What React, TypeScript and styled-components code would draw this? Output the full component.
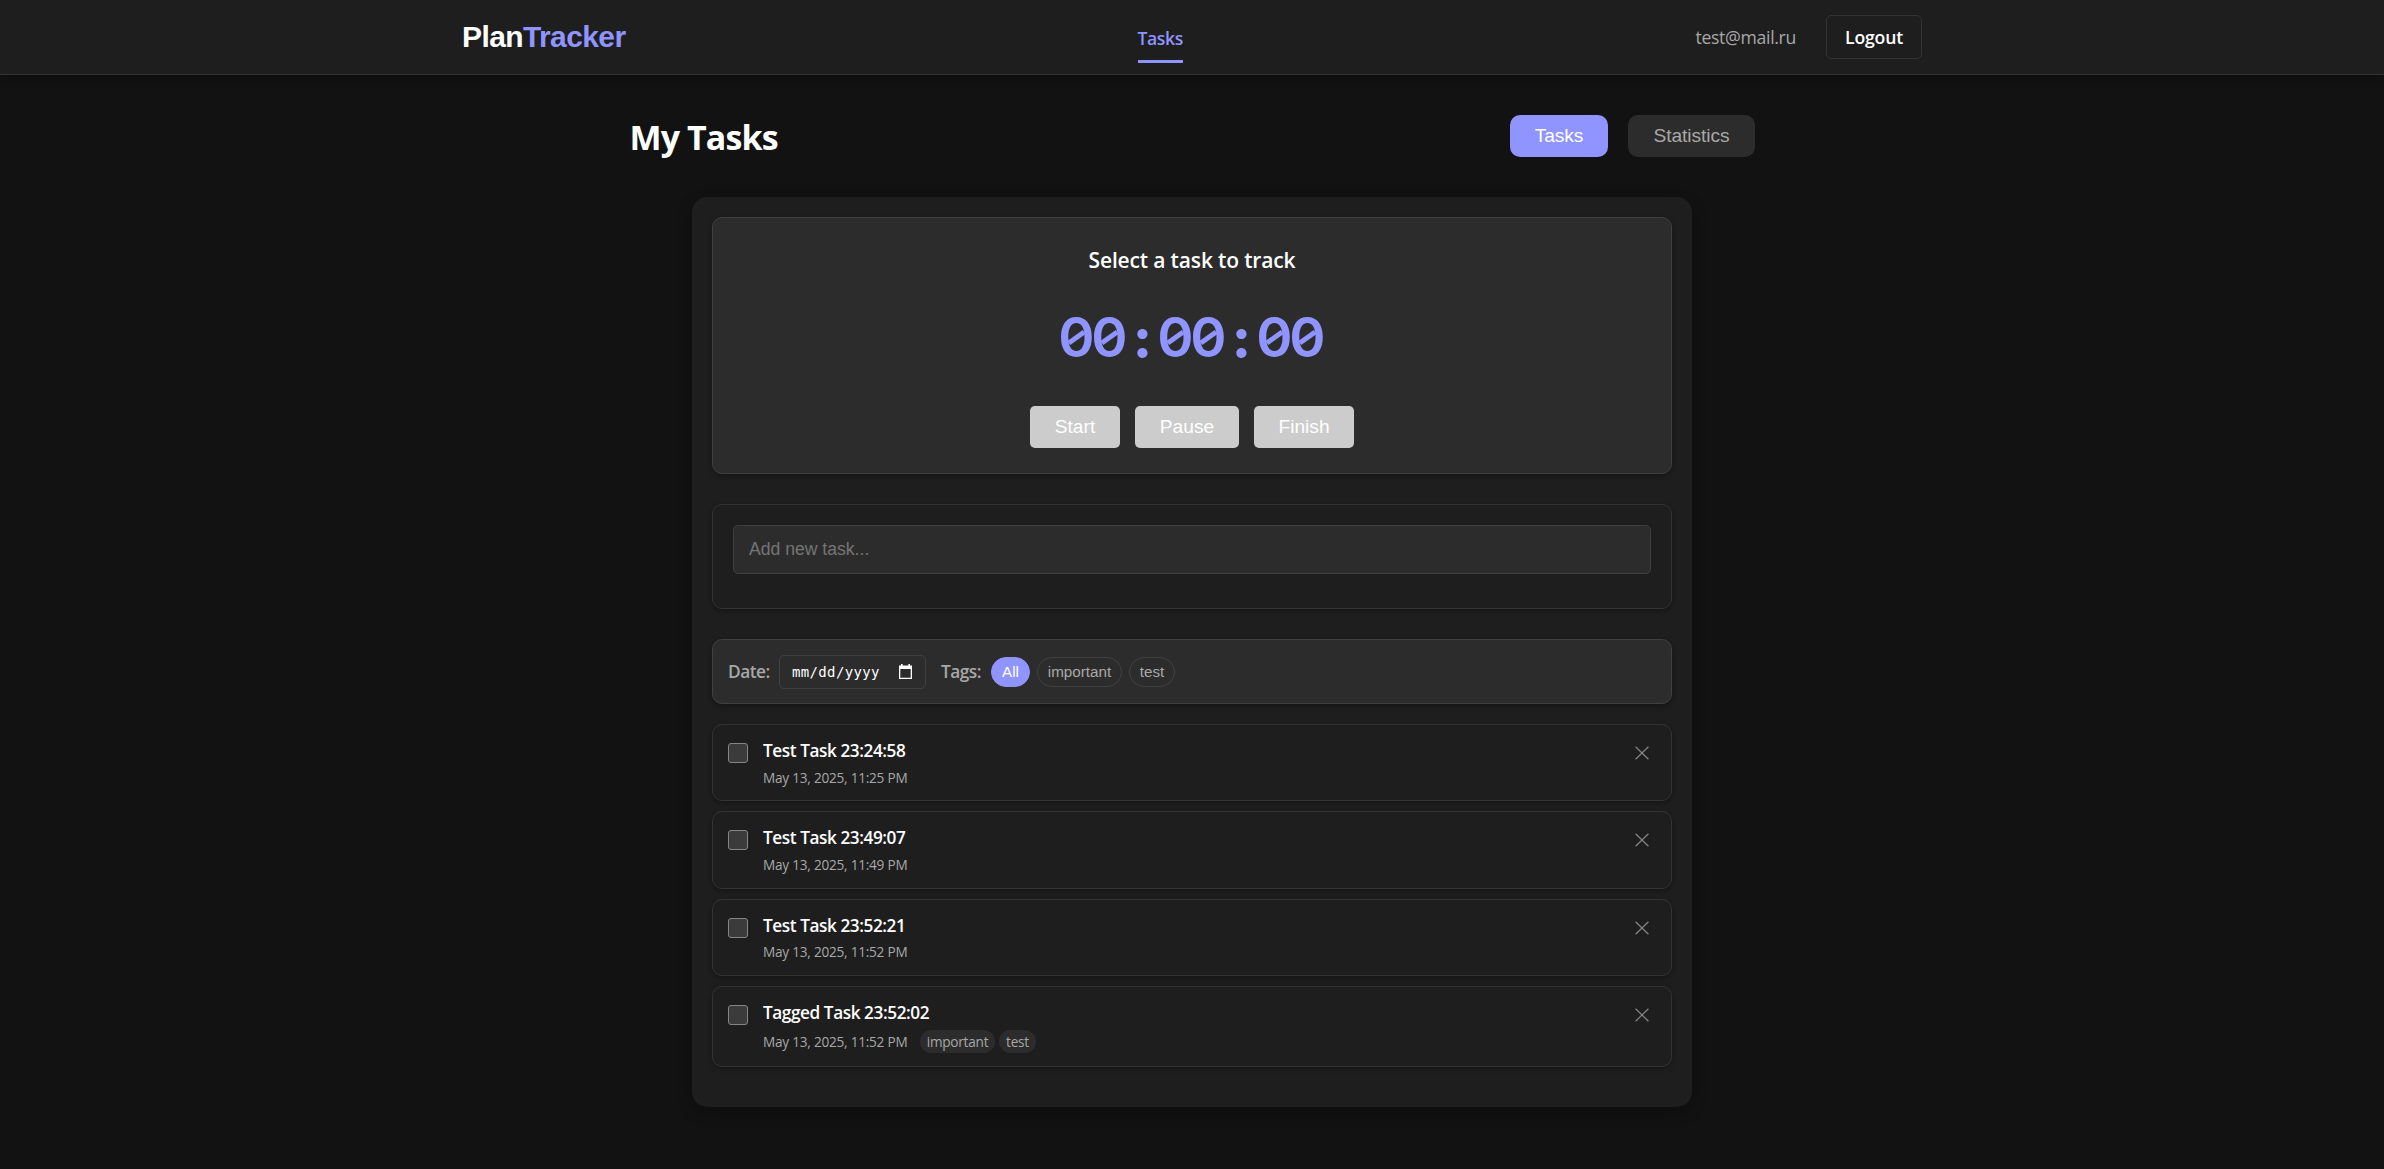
import React from "react";
import styled, { createGlobalStyle } from "styled-components";

const UI = `"Open Sans", "Noto Sans", sans-serif`;
const ARIAL = `"Liberation Sans", Arial, sans-serif`;

const Global = createGlobalStyle`
  *, *::before, *::after { box-sizing: border-box; }
  body { margin: 0; background: #121212; color: #fff; font-family: ${UI}; font-size: 17px; }
  h1, h2, h3, p, ul { margin: 0; padding: 0; font: inherit; }
  button, input { margin: 0; }
`;

const Page = styled.div`
  min-height: 1169px;
  background: #121212;
`;

const Header = styled.header`
  height: 75px;
  background: #1e1e1e;
  border-bottom: 1px solid #333;
  box-shadow: 0 2px 8px rgba(0, 0, 0, 0.3);
`;

const HeaderInner = styled.div`
  width: 1460px;
  height: 74px;
  margin: 0 auto;
  display: grid;
  grid-template-columns: 1fr auto 1fr;
  align-items: center;
`;

const Logo = styled.div`
  font: 700 30px/36px ${ARIAL};
  letter-spacing: -0.6px;
  span { color: #8f94fe; }
`;

const NavLink = styled.a`
  align-self: start;
  margin: 22px 64px 0 0;
  width: 45px;
  height: 41px;
  font-size: 17.6px;
  line-height: 32px;
  font-weight: 600;
  letter-spacing: -0.4px;
  white-space: nowrap;
  color: #8f94fe;
  border-bottom: 3px solid #8f94fe;
`;

const User = styled.div`
  justify-self: end;
  display: flex;
  align-items: center;
  gap: 30px;
`;

const Email = styled.span`
  color: #a8a8a8;
  font-size: 17.6px;
  letter-spacing: -0.3px;
`;

const Logout = styled.button`
  width: 96px;
  height: 44px;
  padding: 0;
  border: 1px solid #333;
  border-radius: 5px;
  background: transparent;
  color: #fff;
  font: 600 17.6px/24px ${UI};
  letter-spacing: -0.15px;
`;

const Main = styled.main`
  width: 1125px;
  margin: 0 auto;
  padding-top: 40px;
`;

const TitleRow = styled.div`
  display: flex;
  justify-content: space-between;
  align-items: flex-start;
  height: 82px;
`;

const Title = styled.h1`
  font: 700 34px/44px ${UI};
  letter-spacing: -0.9px;
`;

const Tabs = styled.div`
  display: flex;
  gap: 20px;
`;

const Tab = styled.button<{ $w: number; $active?: boolean }>`
  width: ${(p) => p.$w}px;
  height: 42px;
  padding: 0 0 1px 1px;
  border: 0;
  border-radius: 10px;
  background: ${(p) => (p.$active ? "#8f94fe" : "#2c2c2c")};
  color: ${(p) => (p.$active ? "#fff" : "#a8a8a8")};
  font: 400 19.2px/22px ${ARIAL};
  letter-spacing: -0.1px;
`;

const Panel = styled.section`
  width: 1000px;
  height: 910px;
  margin: 0 auto;
  padding: 20px;
  border-radius: 15px;
  background: #1e1e1e;
  box-shadow: 0 5px 15px rgba(0, 0, 0, 0.3);
`;

const Card = styled.div<{ $raised?: boolean }>`
  border: 1px solid ${(p) => (p.$raised ? "#404040" : "#333")};
  border-radius: 10px;
  background: ${(p) => (p.$raised ? "#2c2c2c" : "#1e1e1e")};
  box-shadow: 0 2px 5px rgba(0, 0, 0, 0.3);
`;

const Tracker = styled(Card)`
  height: 257px;
  display: flex;
  flex-direction: column;
  align-items: center;
  padding-top: 25px;
`;

const TrackerTitle = styled.h2`
  font: 600 21px/34px ${UI};
  letter-spacing: -0.15px;
`;

const Clock = styled.div`
  display: flex;
  margin-top: 26px;
  color: #8f94fe;
  font: 600 55px/68px Inter, sans-serif;
`;

const Digit = styled.span`
  position: relative;
  width: 33px;
  display: flex;
  justify-content: center;
  letter-spacing: 0;
  &::after {
    content: "";
    position: absolute;
    left: 7px;
    top: 32px;
    width: 19px;
    height: 5px;
    background: #8f94fe;
    transform: rotate(-36deg);
  }
`;

const Colon = styled.span`
  width: 33px;
  display: flex;
  justify-content: center;
  font-weight: 800;
`;

const Controls = styled.div`
  display: flex;
  gap: 15px;
  margin-top: 35px;
`;

const Control = styled.button<{ $w: number }>`
  width: ${(p) => p.$w}px;
  height: 42px;
  padding: 0 0 1px;
  border: 0;
  border-radius: 5px;
  background: #ccc;
  color: #fff;
  font: 400 19.2px/22px ${ARIAL};
`;

const Composer = styled(Card)`
  height: 105px;
  margin-top: 30px;
  padding: 20px;
`;

const TaskInput = styled.input`
  display: block;
  width: 100%;
  height: 49px;
  padding: 1px 15px 1px;
  border: 1px solid #404040;
  border-radius: 5px;
  background: #2c2c2c;
  color: #fff;
  font: 400 17.6px ${ARIAL};
  &::placeholder { color: #757575; }
`;

const Filters = styled(Card)`
  height: 65px;
  margin-top: 30px;
  padding: 0 15px;
  display: flex;
  align-items: center;
`;

const FilterLabel = styled.span<{ $w: number }>`
  width: ${(p) => p.$w}px;
  color: #a8a8a8;
  font-weight: 600;
  font-size: 17.3px;
  letter-spacing: -0.5px;
  white-space: nowrap;
`;

const DateField = styled.div`
  width: 147px;
  height: 34px;
  margin-right: 15px;
  padding: 0 13px 0 12px;
  display: flex;
  align-items: center;
  justify-content: space-between;
  border: 1px solid #404040;
  border-radius: 5px;
  font: 400 14px/20px "DejaVu Sans Mono", monospace;
  svg { display: block; }
`;

const DateText = styled.span`
  letter-spacing: 0.35px;
`;

const Chips = styled.div`
  display: flex;
  gap: 7px;
`;

const Chip = styled.button<{ $w: number; $active?: boolean }>`
  width: ${(p) => p.$w}px;
  height: 30px;
  padding: 0;
  border: 1px solid ${(p) => (p.$active ? "#8f94fe" : "#404040")};
  border-radius: 15px;
  background: ${(p) => (p.$active ? "#8f94fe" : "transparent")};
  color: ${(p) => (p.$active ? "#fff" : "#a8a8a8")};
  font: 400 15.2px/20px ${ARIAL};
`;

const List = styled.ul`
  list-style: none;
  display: flex;
  flex-direction: column;
  gap: 10px;
  margin-top: 20px;
`;

const Item = styled(Card).attrs({ as: "li" })<{ $h: number }>`
  height: ${(p) => p.$h}px;
  padding: 0 14px 0 15px;
  display: flex;
`;

const Check = styled.span`
  flex: none;
  width: 20px;
  height: 20px;
  margin-top: 18px;
  border: 1px solid #858585;
  border-radius: 3px;
  background: #3b3b3b;
`;

const Body = styled.div`
  flex: 1;
  margin-left: 15px;
  padding-top: 13px;
`;

const Name = styled.h3`
  font: 600 17.2px/25px ${UI};
  letter-spacing: -0.42px;
`;

const Meta = styled.div<{ $tagged: boolean }>`
  display: flex;
  align-items: center;
  height: 24px;
  margin-top: ${(p) => (p.$tagged ? 4 : 2)}px;
  color: #a8a8a8;
  font-size: 13.6px;
  letter-spacing: -0.23px;
`;

const DateStamp = styled.span`
  width: 157px;
  white-space: nowrap;
`;

const TagRow = styled.div`
  display: flex;
  gap: 4px;
`;

const Tag = styled.span<{ $w: number }>`
  width: ${(p) => p.$w}px;
  height: 23px;
  border-radius: 12px;
  background: #2c2c2c;
  text-align: center;
  line-height: 23px;
`;

const Remove = styled.button`
  width: 30px;
  height: 30px;
  margin-top: 13px;
  padding: 0;
  border: 0;
  background: none;
  display: grid;
  place-items: center;
`;

const CalendarIcon = () => (
  <svg width="13" height="15" viewBox="0 0 13 15">
    <path fill="#fff" fillRule="evenodd" d="M2 0h1.6v1.4h5.8V0H11v1.4h2V15H0V1.4h2zM1.3 5v8.7h10.4V5z" />
  </svg>
);

const CrossIcon = () => (
  <svg width="14" height="14" viewBox="0 0 14 14" fill="none" stroke="#858585" strokeWidth="1.2">
    <path d="M.6.8l12.8 12.4M13.4.8L.6 13.2" />
  </svg>
);

const tasks = [
  { name: "Test Task 23:24:58", date: "May 13, 2025, 11:25 PM", tags: [] as string[] },
  { name: "Test Task 23:49:07", date: "May 13, 2025, 11:49 PM", tags: [] as string[] },
  { name: "Test Task 23:52:21", date: "May 13, 2025, 11:52 PM", tags: [] as string[] },
  { name: "Tagged Task 23:52:02", date: "May 13, 2025, 11:52 PM", tags: ["important", "test"] },
];

export default function App() {
  return (
    <Page>
      <Global />
      <Header>
        <HeaderInner>
          <Logo>Plan<span>Tracker</span></Logo>
          <NavLink>Tasks</NavLink>
          <User>
            <Email>test@mail.ru</Email>
            <Logout>Logout</Logout>
          </User>
        </HeaderInner>
      </Header>
      <Main>
        <TitleRow>
          <Title>My Tasks</Title>
          <Tabs>
            <Tab $w={98} $active>Tasks</Tab>
            <Tab $w={127}>Statistics</Tab>
          </Tabs>
        </TitleRow>
        <Panel>
          <Tracker $raised>
            <TrackerTitle>Select a task to track</TrackerTitle>
            <Clock>
              {"00:00:00".split("").map((c, i) =>
                c === ":" ? <Colon key={i}>{c}</Colon> : <Digit key={i}>{c}</Digit>
              )}
            </Clock>
            <Controls>
              <Control $w={90}>Start</Control>
              <Control $w={104}>Pause</Control>
              <Control $w={100}>Finish</Control>
            </Controls>
          </Tracker>
          <Composer>
            <TaskInput placeholder="Add new task..." />
          </Composer>
          <Filters $raised>
            <FilterLabel $w={51}>Date:</FilterLabel>
            <DateField>
              <DateText>mm/dd/yyyy</DateText>
              <CalendarIcon />
            </DateField>
            <FilterLabel $w={50}>Tags:</FilterLabel>
            <Chips>
              <Chip $w={39} $active>All</Chip>
              <Chip $w={85}>important</Chip>
              <Chip $w={46}>test</Chip>
            </Chips>
          </Filters>
          <List>
            {tasks.map((t) => (
              <Item key={t.name} $h={t.tags.length ? 80.8 : 77.4}>
                <Check />
                <Body>
                  <Name>{t.name}</Name>
                  <Meta $tagged={t.tags.length > 0}>
                    <DateStamp>{t.date}</DateStamp>
                    <TagRow>
                      {t.tags.map((g) => <Tag key={g} $w={g === "test" ? 37 : 75}>{g}</Tag>)}
                    </TagRow>
                  </Meta>
                </Body>
                <Remove><CrossIcon /></Remove>
              </Item>
            ))}
          </List>
        </Panel>
      </Main>
    </Page>
  );
}
